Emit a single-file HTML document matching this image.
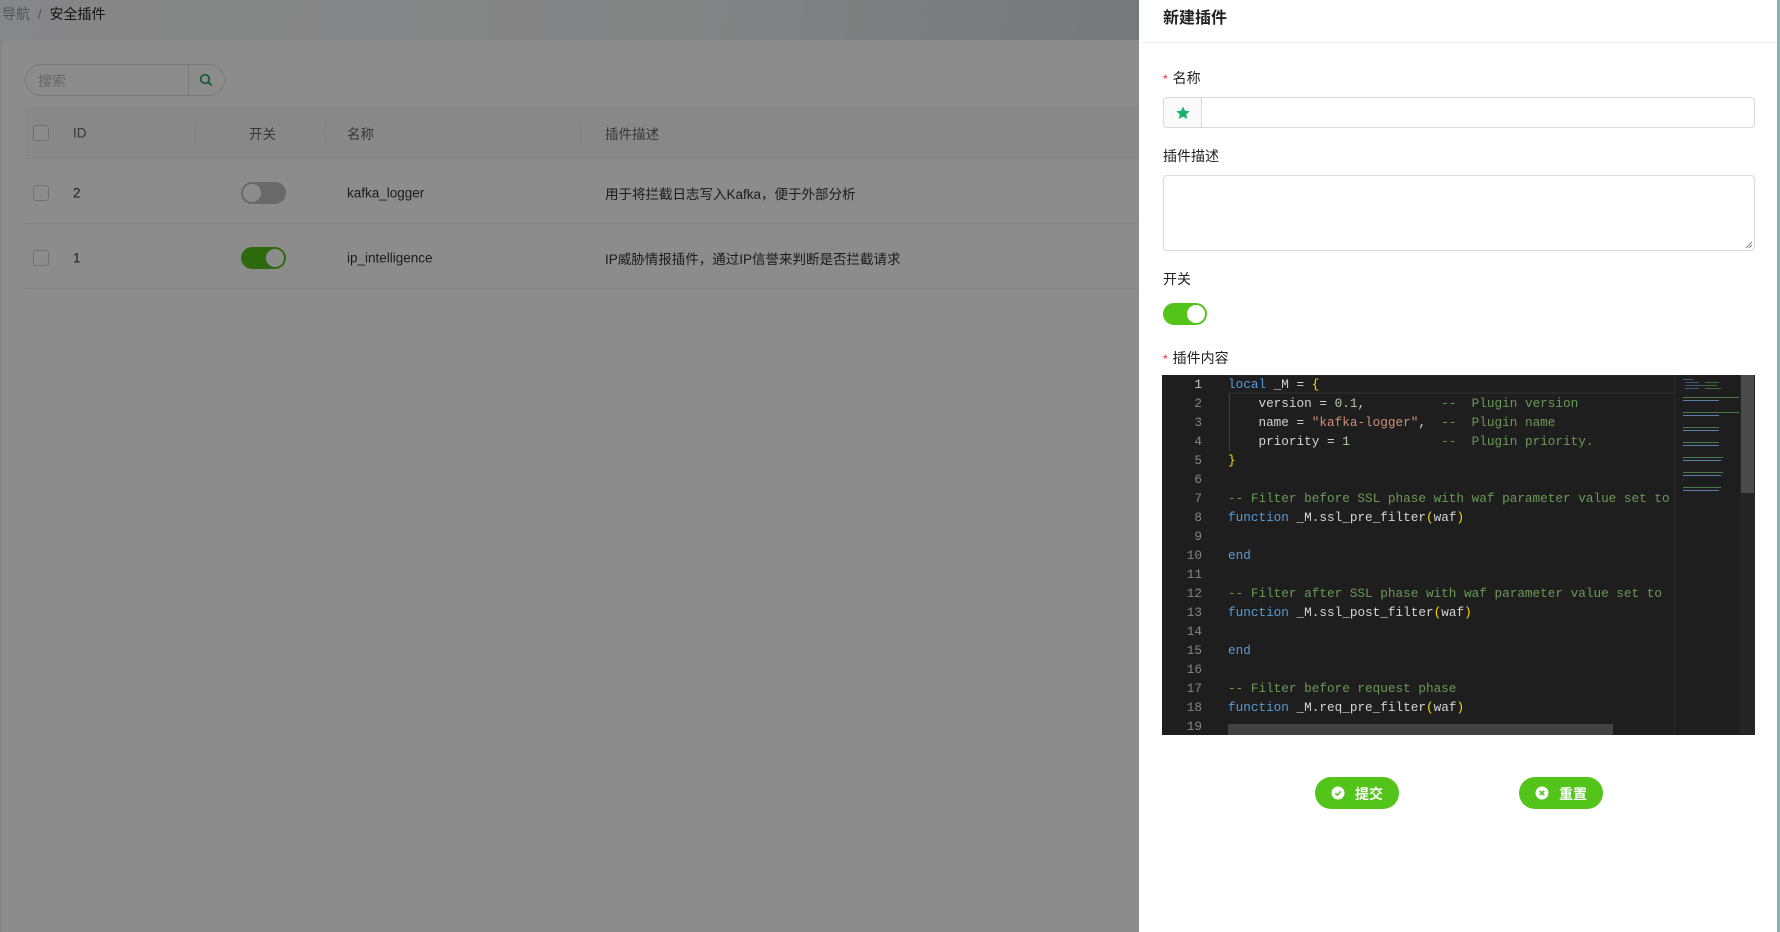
<!DOCTYPE html>
<html><head><meta charset="utf-8"><style>
*{box-sizing:border-box;margin:0;padding:0}
body{width:1780px;height:932px;overflow:hidden;position:relative;background:#f0f2f5;font-family:"Liberation Sans","Noto Sans CJK SC",sans-serif;font-size:14px;color:#333}
.hdr{position:absolute;left:0;top:0;width:1139px;height:40px;background:linear-gradient(100deg,#f5f6f7 0%,#eef0f1 60%,#d6dcdf 100%)}
.bc{position:absolute;left:2px;top:4px;font-size:14px;color:#999}
.bc b{font-weight:normal;color:#222}
.card{position:absolute;left:2px;top:40px;width:1140px;height:892px;background:#fff;border-radius:8px 0 0 0}
.search{position:absolute;left:25px;top:64px;width:200px;height:32px;border:1px solid #ddd;border-radius:16px;background:#fff}
.search span{position:absolute;left:12px;top:6px;color:#bbb}
.search i{position:absolute;left:162px;top:0;width:1px;height:30px;background:#ddd}
.table{position:absolute;left:25px;top:107px;width:1120px}
.th{height:52px;background:#f7f7f7;border-bottom:1px solid #eee;position:relative}
.tr{height:65px;border-bottom:1px solid #eee;position:relative}
.c{position:absolute;top:50%;transform:translateY(-50%);white-space:nowrap;font-size:13.5px}
.tr .c,.tr .cb,.tr .sw{margin-top:2px}
.tr .cb{margin-top:-6px}
.tr .sw{margin-top:-9px}
.cb{position:absolute;left:8px;top:50%;margin-top:-8px;width:16px;height:16px;border:1px solid #ccc;border-radius:3px;background:#fff}
.th .c{color:#666}
.sep{position:absolute;top:16px;width:1px;height:20px;background:#eee}
.sw{position:absolute;left:216px;top:50%;margin-top:-11px;width:45px;height:22px;border-radius:11px}
.sw::after{content:"";position:absolute;top:2px;width:18px;height:18px;border-radius:50%;background:#fff}
.off{background:#bfbfbf}.off::after{left:2px}
.on{background:#52c41a}.on::after{right:2px}
.mask{position:absolute;left:0;top:0;width:1139px;height:932px;background:rgba(0,0,0,.45)}
.drawer{position:absolute;left:1139px;top:0;width:641px;height:932px;background:#fff;border-right:3px solid #7fb8b0}
.dt{position:absolute;left:24px;top:4px;font-size:16px;font-weight:bold;color:#222}
.dl{position:absolute;left:0;top:42px;width:638px;height:1px;background:#eee}
.lbl{position:absolute;left:24px;font-size:14px;color:#222}
.lbl em{color:#f5222d;font-style:normal;font-size:12px;margin-right:5px}
.inp{position:absolute;left:24px;top:97px;width:592px;height:31px;border:1px solid #d9d9d9;border-radius:4px}
.inp i{position:absolute;left:0;top:0;width:38px;height:29px;background:#fafafa;border-right:1px solid #d9d9d9;border-radius:4px 0 0 4px}
.ta{position:absolute;left:24px;top:175px;width:592px;height:76px;border:1px solid #d9d9d9;border-radius:4px}
.dsw{position:absolute;left:24px;top:303px;width:44px;height:22px;border-radius:11px;background:#52c41a}
.dsw::after{content:"";position:absolute;right:2px;top:2px;width:18px;height:18px;border-radius:50%;background:#fff}
.ed{position:absolute;left:23px;top:375px;width:593px;height:360px;background:#1e1e1e;overflow:hidden}
.ln{position:absolute;left:0;top:0;width:40px;text-align:right;font-family:"Liberation Mono",monospace;font-size:12.7px;line-height:19px;color:#858585}
.ln b{color:#c6c6c6;font-weight:normal}
.code{position:absolute;left:66px;top:0;font-family:"Liberation Mono",monospace;font-size:12.7px;line-height:19px;color:#d4d4d4;white-space:pre}
.k{color:#569cd6}.s{color:#ce9178}.cm{color:#6a9955}.y{color:#ffd700}.n{color:#b5cea8}
.cur{position:absolute;left:66px;top:0;width:446px;height:19px;border-bottom:2px solid #282828;border-top:1px solid #282828}
.guide{position:absolute;left:67px;top:19px;width:1px;height:57px;background:#404040}
.mm{position:absolute;left:512px;top:0;width:66px;height:360px;background:#1e1e1e;border-left:1px solid #2a2a2a}
.sb{position:absolute;left:578px;top:0;width:15px;height:360px;background:#252526}
.sb i{position:absolute;left:1px;top:0;width:13px;height:118px;background:#4a4a4a}
.hs{position:absolute;left:66px;top:349px;width:385px;height:11px;background:#424242}
.btn{position:absolute;top:777px;width:84px;height:32px;border-radius:16px;background:#52c41a;color:#fff;font-weight:bold;font-size:14px}
.btn span{position:absolute;left:40px;top:7px}
.btn svg{position:absolute;left:16px;top:9px}
</style></head><body>
<div class="hdr"><div class="bc">导航 &nbsp;/&nbsp; <b>安全插件</b></div></div>
<div class="card"></div>
<div class="search"><span>搜索</span><i></i>
<svg style="position:absolute;left:173px;top:8px" width="14" height="14" viewBox="0 0 14 14"><circle cx="6" cy="6" r="4.3" fill="none" stroke="#1aa35a" stroke-width="1.6"/><path d="M9 9l3.5 3.5" stroke="#1aa35a" stroke-width="1.8"/></svg></div>
<div class="table">
<div class="th"><div class="cb"></div><div class="c" style="left:48px">ID</div><div class="sep" style="left:170px"></div><div class="c" style="left:224px">开关</div><div class="sep" style="left:300px"></div><div class="c" style="left:322px">名称</div><div class="sep" style="left:555px"></div><div class="c" style="left:580px">插件描述</div></div>
<div class="tr"><div class="cb"></div><div class="c" style="left:48px">2</div><div class="sw off"></div><div class="c" style="left:322px">kafka_logger</div><div class="c" style="left:580px">用于将拦截日志写入Kafka，便于外部分析</div></div>
<div class="tr"><div class="cb"></div><div class="c" style="left:48px">1</div><div class="sw on"></div><div class="c" style="left:322px">ip_intelligence</div><div class="c" style="left:580px">IP威胁情报插件，通过IP信誉来判断是否拦截请求</div></div>
</div>
<div class="mask"></div>
<div class="drawer">
<div class="dt">新建插件</div><div class="dl"></div>
<div class="lbl" style="top:68px"><em>*</em>名称</div>
<div class="inp"><i></i><svg style="position:absolute;left:11px;top:7px" width="16" height="16" viewBox="0 0 16 16"><path d="M8 1.5l2 4.3 4.6.5-3.4 3.1 1 4.6L8 11.6 3.8 14l1-4.6L1.4 6.3 6 5.8z" fill="#15b56d"/></svg></div>
<div class="lbl" style="top:146px">插件描述</div>
<div class="ta"><svg style="position:absolute;right:1px;bottom:1px" width="8" height="8"><path d="M7 1L1 7M7 4L4 7" stroke="#888" stroke-width="1"/></svg></div>
<div class="lbl" style="top:269px">开关</div>
<div class="dsw"></div>
<div class="lbl" style="top:348px"><em>*</em>插件内容</div>
<div class="ed">
<div class="cur"></div><div class="guide"></div>
<div class="ln"><b>1</b><br>2<br>3<br>4<br>5<br>6<br>7<br>8<br>9<br>10<br>11<br>12<br>13<br>14<br>15<br>16<br>17<br>18<br>19</div>
<div class="code"><span class="k">local</span> _M = <span class="y">{</span>
    version = <span class="n">0.1</span>,          <span class="cm">--  Plugin version</span>
    name = <span class="s">"kafka-logger"</span>,  <span class="cm">--  Plugin name</span>
    priority = <span class="n">1</span>            <span class="cm">--  Plugin priority.</span>
<span class="y">}</span>

<span class="cm">-- Filter before SSL phase with waf parameter value set to</span>
<span class="k">function</span> _M.ssl_pre_filter<span class="y">(</span>waf<span class="y">)</span>

<span class="k">end</span>

<span class="cm">-- Filter after SSL phase with waf parameter value set to</span>
<span class="k">function</span> _M.ssl_post_filter<span class="y">(</span>waf<span class="y">)</span>

<span class="k">end</span>

<span class="cm">-- Filter before request phase</span>
<span class="k">function</span> _M.req_pre_filter<span class="y">(</span>waf<span class="y">)</span>
</div>
<div class="hs"></div>
<div class="mm"><svg width="66" height="130"><g fill="#4a6a8a" opacity=".8"><rect x="8" y="4" width="10" height="1"/><rect x="10" y="7" width="14" height="1"/><rect x="10" y="10" width="22" height="1"/><rect x="10" y="13" width="14" height="1"/></g><g fill="#3c6a3c"><rect x="30" y="7" width="14" height="1"/><rect x="30" y="10" width="12" height="1"/><rect x="30" y="13" width="16" height="1"/></g>
<g fill="#4a7a4a"><rect x="8" y="22" width="56" height="1"/><rect x="8" y="37" width="56" height="1"/><rect x="8" y="52" width="36" height="1"/><rect x="8" y="67" width="36" height="1"/><rect x="8" y="82" width="40" height="1"/><rect x="8" y="97" width="40" height="1"/><rect x="8" y="112" width="38" height="1"/></g>
<g fill="#5a7fa8"><rect x="8" y="25" width="36" height="1"/><rect x="8" y="40" width="36" height="1"/><rect x="8" y="55" width="36" height="1"/><rect x="8" y="70" width="36" height="1"/><rect x="8" y="85" width="38" height="1"/><rect x="8" y="100" width="38" height="1"/><rect x="8" y="115" width="36" height="1"/></g></svg></div>
<div class="sb"><i></i></div>
</div>
<div class="btn" style="left:176px"><svg width="14" height="14" viewBox="0 0 14 14"><circle cx="7" cy="7" r="6.5" fill="#fff"/><path d="M4.3 7.2l2 2 3.5-3.8" fill="none" stroke="#52c41a" stroke-width="1.5"/></svg><span>提交</span></div>
<div class="btn" style="left:380px"><svg width="14" height="14" viewBox="0 0 14 14"><circle cx="7" cy="7" r="6.5" fill="#fff"/><path d="M4.8 4.8l4.4 4.4M9.2 4.8L4.8 9.2" stroke="#52c41a" stroke-width="1.6"/></svg><span>重置</span></div>
</div>
</body></html>
